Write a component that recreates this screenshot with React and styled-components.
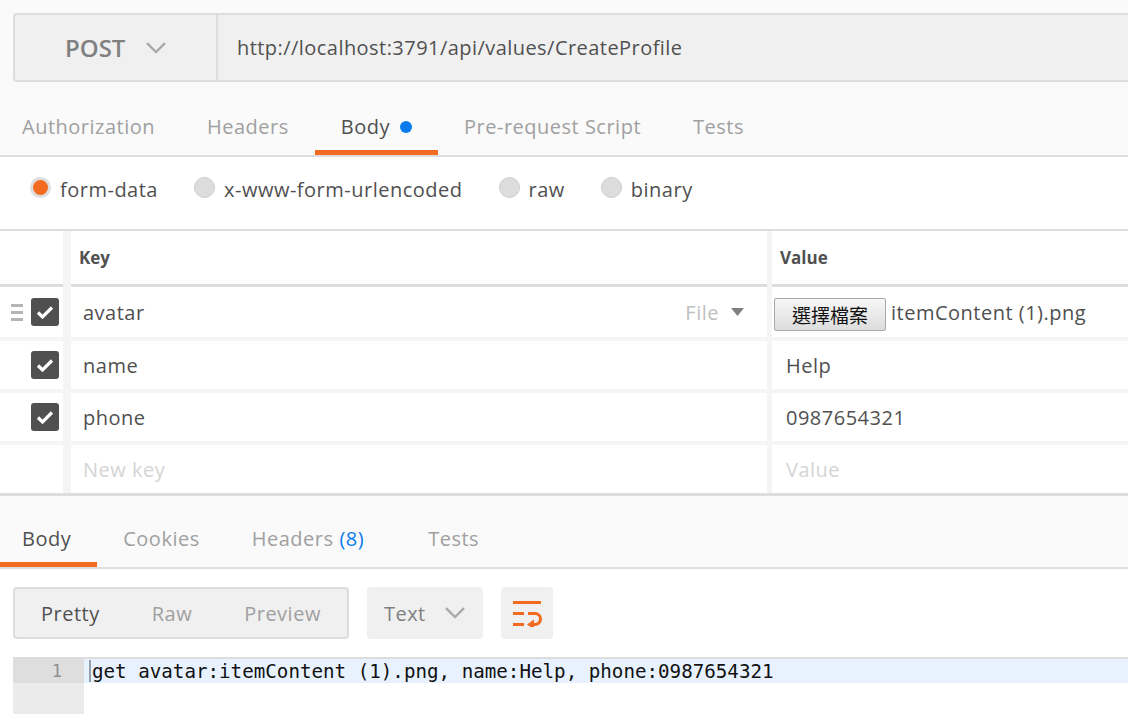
import React from 'react';
import styled, { createGlobalStyle, css } from 'styled-components';

const GlobalStyle = createGlobalStyle`
  html, body {
    margin: 0;
    padding: 0;
    background: #ffffff;
    font-family: "Open Sans", "Noto Sans", sans-serif;
    color: #505050;
    overflow: hidden;
  }
  * { box-sizing: border-box; }
`;

const Page = styled.div`
  width: 1128px;
  height: 714px;
  overflow: hidden;
  display: flex;
  flex-direction: column;
  font-size: 20px;
  letter-spacing: 0.5px;
`;

/* ---------- request bar ---------- */

const TopArea = styled.div`
  background: #fafafa;
  padding-top: 13px;
  border-bottom: 2px solid #dddddd;
`;

const UrlBar = styled.div`
  margin-left: 13px;
  height: 69px;
  display: flex;
  border: 2px solid #dddddd;
  border-right: none;
  border-radius: 4px 0 0 4px;
  background: #f0f0f0;
`;

const Method = styled.div`
  width: 203px;
  display: flex;
  align-items: center;
  gap: 20px;
  padding-left: 50px;
  border-right: 2px solid #dddddd;
  font-size: 24px;
  font-weight: 600;
  letter-spacing: 0;
  color: #808080;
`;

const UrlText = styled.div`
  display: flex;
  align-items: center;
  padding-left: 19px;
  letter-spacing: 0.45px;
  color: #505050;
`;

const Chevron = ({ color = '#aaaaaa', size = 22 }) => (
  <svg width={size} height={size * 0.6} viewBox="0 0 22 13">
    <path d="M2 2 L11 11 L20 2" fill="none" stroke={color} strokeWidth="2.4" />
  </svg>
);

/* ---------- tabs ---------- */

const TabRow = styled.div`
  display: flex;
  height: ${p => p.height}px;
  background: #fafafa;
`;

const Tab = styled.div`
  display: flex;
  align-items: center;
  gap: 10px;
  padding: ${p => p.offset || 20}px 26px 0;
  color: ${p => (p.active ? '#505050' : '#a0a0a0')};
  border-bottom: 5px solid ${p => (p.active ? '#f26b21' : 'transparent')};
  &:first-child { padding-left: 22px; }
`;

const Dot = styled.span`
  width: 12px;
  height: 12px;
  border-radius: 50%;
  background: #097bed;
  margin-top: 1px;
`;

const Count = styled.span`
  color: #097bed;
  margin: 0 12px 0 6px;
`;

const ResponseTabs = styled(TabRow)`
  border-bottom: 2px solid #dddddd;
`;

/* ---------- body type radios ---------- */

const RadioRow = styled.div`
  height: 72px;
  display: flex;
  align-items: center;
  gap: 36px;
  padding: 0 0 8px 30px;
  background: #ffffff;
`;

const RadioItem = styled.label`
  display: flex;
  align-items: center;
  gap: 9px;
  color: #505050;
`;

const RadioCircle = styled.span`
  width: 21px;
  height: 21px;
  border-radius: 50%;
  background: #dddddd;
  border: 1px solid #cccccc;
  margin-top: -4px;
  ${p =>
    p.checked &&
    css`
      background: #f26b21;
      border: 3px solid #dedede;
    `};
`;

/* ---------- key/value table ---------- */

const Table = styled.div`
  display: grid;
  grid-template-columns: 63px 704px 1fr;
  grid-template-rows: 52px 50px 48px 48px 48px;
  row-gap: 4px;
  background: #f5f5f5;
  border-top: 2px solid #dddddd;
  border-bottom: 3px solid #dddddd;
`;

const HeaderCell = styled.div`
  display: flex;
  align-items: center;
  padding-left: 8px;
  font-size: 17px;
  font-weight: 700;
  letter-spacing: 0;
  color: #505050;
  background: #ffffff;
  border-bottom: 3px solid #dddddd;
  margin-bottom: -4px;
  margin-left: ${p => p.inset}px;
`;

const CheckCell = styled.div`
  display: flex;
  align-items: center;
  justify-content: flex-end;
  gap: 8px;
  padding-right: 4px;
  background: #ffffff;
  ${p => p.header && css`
    border-bottom: 3px solid #dddddd;
    margin-bottom: -4px;
  `}
`;

const KeyCell = styled.div`
  display: flex;
  align-items: center;
  justify-content: space-between;
  margin-left: 8px;
  padding: 0 23px 0 12px;
  background: #ffffff;
  color: ${p => (p.placeholder ? '#d4d4d4' : '#505050')};
`;

const ValueCell = styled.div`
  display: flex;
  align-items: center;
  gap: 5px;
  margin-left: 5px;
  padding-left: ${p => (p.file ? 2 : 14)}px;
  background: #ffffff;
  white-space: nowrap;
  color: ${p => (p.placeholder ? '#d4d4d4' : '#505050')};
`;

const TypeSelect = styled.span`
  display: flex;
  align-items: center;
  gap: 12px;
  color: #c0c0c0;
`;

const FileButton = styled.button`
  width: 112px;
  height: 33px;
  padding: 0;
  border: 1px solid #a9a9a9;
  border-radius: 2px;
  background: linear-gradient(#f7f7f7, #dddddd);
  font-family: "Noto Sans CJK TC", sans-serif;
  font-size: 19px;
  color: #111111;
  margin-top: 4px;
`;

const Checkbox = styled.span`
  width: 28px;
  height: 28px;
  border-radius: 3px;
  background: #505050;
  display: flex;
  align-items: center;
  justify-content: center;
`;

const Handle = styled.span`
  display: flex;
  flex-direction: column;
  gap: 4px;
  & > i {
    display: block;
    width: 12px;
    height: 3px;
    background: #b5b5b5;
  }
`;

const Check = () => (
  <Checkbox>
    <svg width="18" height="14" viewBox="0 0 18 14">
      <path d="M2 7.5 L6.5 12 L16 2.5" fill="none" stroke="#fff" strokeWidth="3.2" />
    </svg>
  </Checkbox>
);

/* ---------- response ---------- */

const Toolbar = styled.div`
  display: flex;
  gap: 18px;
  padding: 18px 0 18px 13px;
  background: #ffffff;
`;

const Segmented = styled.div`
  display: flex;
  height: 52px;
  border: 2px solid #dddddd;
  border-radius: 4px;
  background: #f0f0f0;
`;

const Segment = styled.div`
  display: flex;
  align-items: center;
  padding: 0 26px;
  color: ${p => (p.active ? '#505050' : '#a0a0a0')};
`;

const Dropdown = styled.div`
  width: 116px;
  height: 52px;
  display: flex;
  align-items: center;
  gap: 18px;
  padding-left: 17px;
  border-radius: 4px;
  background: #f0f0f0;
  color: #808080;
`;

const IconButton = styled.div`
  width: 52px;
  height: 52px;
  display: flex;
  align-items: center;
  justify-content: center;
  border-radius: 4px;
  background: #f0f0f0;
`;

const Editor = styled.div`
  flex: 1;
  display: grid;
  grid-template-columns: 71px 1fr;
  grid-template-rows: 24px 1fr;
  margin-left: 13px;
  border-top: 2px solid #dddddd;
  letter-spacing: 0;
`;

const Gutter = styled.div`
  background: ${p => (p.current ? '#dedede' : '#ebebeb')};
  display: flex;
  align-items: center;
  justify-content: flex-end;
  padding-right: 22px;
  font-family: "DejaVu Sans Mono", monospace;
  font-size: 17px;
  color: #909090;
`;

const CodeLine = styled.div`
  position: relative;
  display: flex;
  align-items: center;
  padding-left: 8px;
  background: ${p => (p.current ? '#e8f2fe' : '#ffffff')};
  font-family: "DejaVu Sans Mono", monospace;
  font-size: 19.2px;
  color: #111111;
  white-space: nowrap;
`;

const Cursor = styled.span`
  position: absolute;
  left: 5px;
  top: 1px;
  width: 2px;
  height: 22px;
  background: #9aa0a8;
`;

const WrapIcon = () => (
  <svg width="30" height="28" viewBox="0 0 30 28">
    <g fill="none" stroke="#f26b21" strokeWidth="3">
      <path d="M1 3.5 H29" />
      <path d="M1 14.5 H12" />
      <path d="M1 25.5 H12" />
      <path d="M16 14.5 H23 A5.5 5.5 0 0 1 23 25.5 H21" />
    </g>
    <path d="M15 25.5 L22 20.5 L22 30.5 Z" fill="#f26b21" />
  </svg>
);

const rows = [
  { key: 'avatar', value: 'itemContent (1).png', file: true },
  { key: 'name', value: 'Help' },
  { key: 'phone', value: '0987654321' },
];

export default function App() {
  return (
    <Page>
      <GlobalStyle />
      <TopArea>
        <UrlBar>
          <Method>
            POST
            <Chevron />
          </Method>
          <UrlText>http://localhost:3791/api/values/CreateProfile</UrlText>
        </UrlBar>
        <TabRow height={73}>
          <Tab>Authorization</Tab>
          <Tab>Headers</Tab>
          <Tab active>
            Body <Dot />
          </Tab>
          <Tab>Pre-request Script</Tab>
          <Tab>Tests</Tab>
        </TabRow>
      </TopArea>

      <RadioRow>
        <RadioItem><RadioCircle checked />form-data</RadioItem>
        <RadioItem><RadioCircle />x-www-form-urlencoded</RadioItem>
        <RadioItem><RadioCircle />raw</RadioItem>
        <RadioItem><RadioCircle />binary</RadioItem>
      </RadioRow>

      <Table>
        <CheckCell header />
        <HeaderCell inset={8}>Key</HeaderCell>
        <HeaderCell inset={5}>Value</HeaderCell>
        {rows.map((r, i) => (
          <React.Fragment key={r.key}>
            <CheckCell>
              {i === 0 && (
                <Handle><i /><i /><i /></Handle>
              )}
              <Check />
            </CheckCell>
            <KeyCell>
              {r.key}
              {r.file && (
                <TypeSelect>
                  File
                  <svg width="13" height="8" viewBox="0 0 13 8">
                    <path d="M0 0 H13 L6.5 8 Z" fill="#808080" />
                  </svg>
                </TypeSelect>
              )}
            </KeyCell>
            <ValueCell file={r.file}>
              {r.file && <FileButton>選擇檔案</FileButton>}
              {r.value}
            </ValueCell>
          </React.Fragment>
        ))}
        <CheckCell />
        <KeyCell placeholder>New key</KeyCell>
        <ValueCell placeholder>Value</ValueCell>
      </Table>

      <ResponseTabs height={73}>
        <Tab active offset={19}>Body</Tab>
        <Tab offset={19}>Cookies</Tab>
        <Tab offset={19}>
          <span>Headers<Count>(8)</Count></span>
        </Tab>
        <Tab offset={19}>Tests</Tab>
      </ResponseTabs>

      <Toolbar>
        <Segmented>
          <Segment active>Pretty</Segment>
          <Segment>Raw</Segment>
          <Segment>Preview</Segment>
        </Segmented>
        <Dropdown>
          Text
          <Chevron />
        </Dropdown>
        <IconButton>
          <WrapIcon />
        </IconButton>
      </Toolbar>

      <Editor>
        <Gutter current>1</Gutter>
        <CodeLine current>
          <Cursor />
          get avatar:itemContent (1).png, name:Help, phone:0987654321
        </CodeLine>
        <Gutter />
        <CodeLine />
      </Editor>
    </Page>
  );
}
